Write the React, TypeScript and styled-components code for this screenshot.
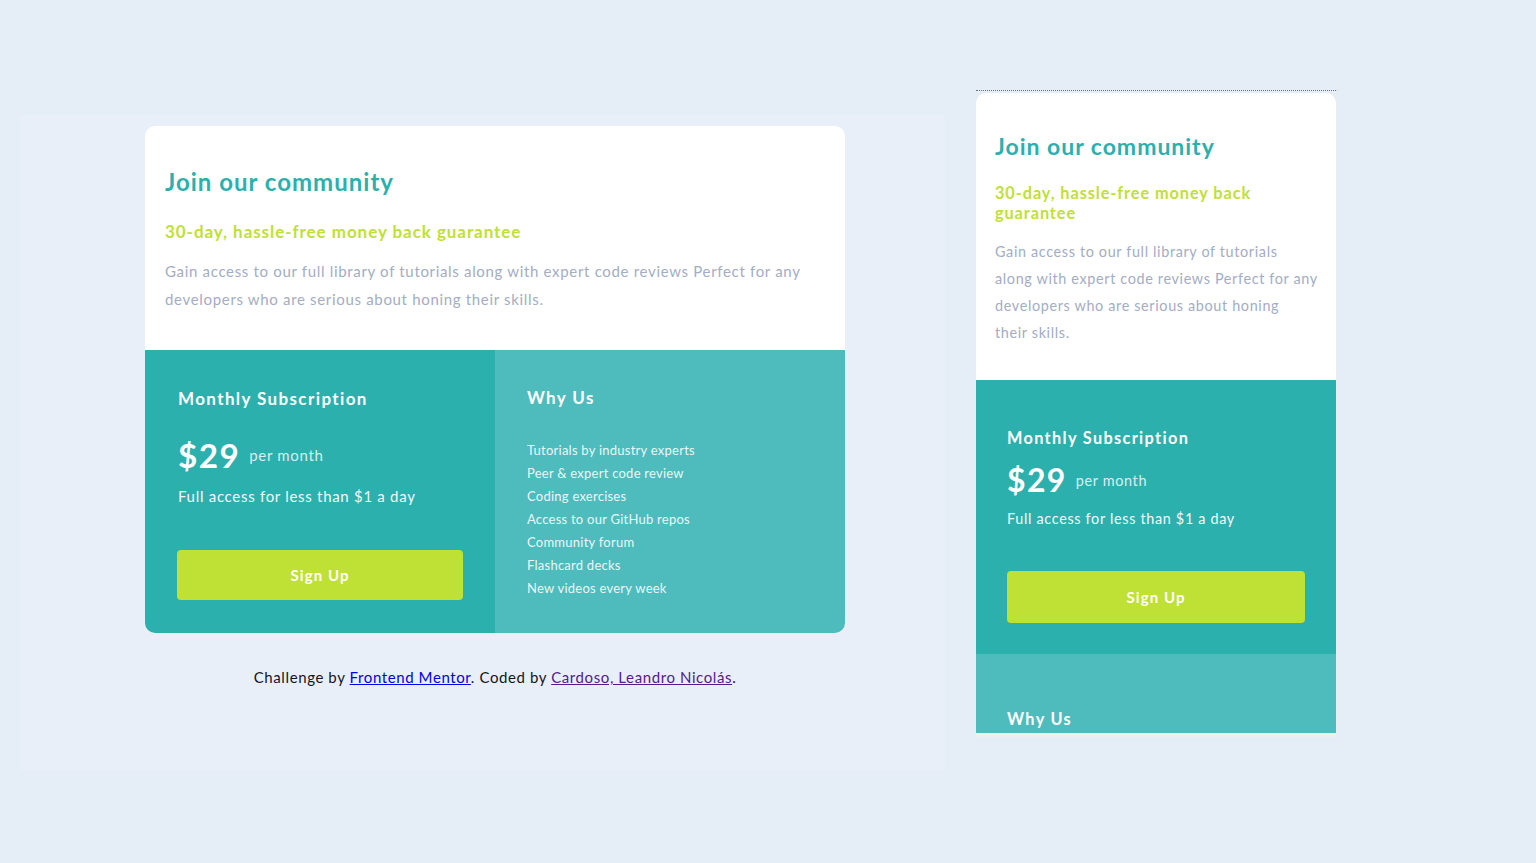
import React from "react";
import styled, { createGlobalStyle } from "styled-components";

const GlobalStyle = createGlobalStyle`
  body {
    margin: 0;
    background-color: #e5edf7;
    font-family: "Lato", "Open Sans", sans-serif;
  }
`;

const Page = styled.main`
  display: flex;
  align-items: flex-start;
  gap: 31px;
  padding: 90px 0 0 20px;
  min-height: 773px;
`;

const DesktopStage = styled.section`
  margin-top: 25px;
  width: 925px;
  height: 655px;
  background-color: #e8eff9;
  padding: 11px 100px 0 125px;
  box-sizing: border-box;
`;

const MobileFrame = styled.section`
  width: 362px;
  height: 647px;
  box-sizing: border-box;
  border-top: 1px dotted #6d6d6d;
  border-right: 2px solid #e9edf1;
  border-bottom: 4px solid #eeeeee;
  overflow: hidden;
  padding-top: 2px;
  background-color: #e5edf7;
`;

/* text sizes are in em so the mobile copy can shrink a touch */
const Card = styled.article<{ $mobile?: boolean }>`
  width: ${(p) => (p.$mobile ? "360px" : "700px")};
  font-size: ${(p) => (p.$mobile ? "14.4px" : "15px")};
  background: #fff;
  border-radius: ${(p) => (p.$mobile ? "10px 10px 0 0" : "10px")};
  overflow: hidden;
`;

const Intro = styled.div<{ $mobile?: boolean }>`
  padding: ${(p) => (p.$mobile ? "39px 20px 34px 19px" : "41px 20px 37px 20px")};
`;

const Title = styled.h1`
  margin: 0;
  font-size: 1.6em;
  line-height: 29px;
  font-weight: 700;
  color: #2bb0ae;
  letter-spacing: 0.042em;
`;

const Guarantee = styled.h2<{ $mobile?: boolean }>`
  margin: ${(p) => (p.$mobile ? "22px 0 15px" : "26px 0 15px")};
  font-size: 1.1333em;
  line-height: 20px;
  font-weight: 700;
  color: #bfe034;
  letter-spacing: 0.056em;
`;

const Lead = styled.p<{ $mobile?: boolean }>`
  margin: 0;
  font-size: 1em;
  line-height: ${(p) => (p.$mobile ? "27px" : "28px")};
  color: #a3adc4;
  letter-spacing: 0.045em;
  white-space: ${(p) => (p.$mobile ? "nowrap" : "normal")};
`;

const Bottom = styled.div<{ $mobile?: boolean }>`
  display: grid;
  grid-template-columns: ${(p) => (p.$mobile ? "360px" : "350px 350px")};
`;

const Subscription = styled.div<{ $mobile?: boolean }>`
  background-color: #2bb0ae;
  padding: ${(p) => (p.$mobile ? "47px 31px 31px" : "38px 31px 33px 33px")};
  color: #fff;
`;

const WhyUs = styled.div<{ $mobile?: boolean }>`
  background-color: #4ebbbd;
  padding: ${(p) => (p.$mobile ? "54px 31px 40px" : "37px 32px 33px 32px")};
  color: #fff;
`;

const BlockTitle = styled.h3`
  margin: 0;
  font-size: 1.1333em;
  line-height: 22px;
  font-weight: 700;
  letter-spacing: 0.082em;
`;

const PriceRow = styled.div<{ $mobile?: boolean }>`
  display: flex;
  align-items: center;
  gap: 9px;
  margin-top: ${(p) => (p.$mobile ? "16px" : "30px")};
`;

const Price = styled.span`
  font-size: 2.22em;
  line-height: 30px;
  font-weight: 700;
  letter-spacing: 0.042em;
`;

const PerMonth = styled.span`
  font-size: 1em;
  color: #d7efee;
  letter-spacing: 0.047em;
`;

const Access = styled.p<{ $mobile?: boolean }>`
  margin: ${(p) => (p.$mobile ? "14px 0 0" : "16px 0 0")};
  font-size: 1em;
  line-height: 20px;
  color: #f1fafa;
  letter-spacing: 0.047em;
`;

const SignUp = styled.button<{ $mobile?: boolean }>`
  display: block;
  width: ${(p) => (p.$mobile ? "298px" : "286px")};
  height: ${(p) => (p.$mobile ? "52px" : "50px")};
  margin-top: ${(p) => (p.$mobile ? "42px" : "44px")};
  margin-left: ${(p) => (p.$mobile ? "0" : "-1px")};
  border: none;
  border-radius: 4px;
  background-color: #bfe034;
  color: #fff;
  font-family: inherit;
  font-size: 15px;
  font-weight: 700;
  letter-spacing: 1.1px;
  cursor: pointer;
`;

const Features = styled.ul`
  list-style: none;
  margin: 30px 0 0;
  padding: 0;
`;

const Feature = styled.li`
  font-size: 0.8667em;
  line-height: 23px;
  color: #eaf7f7;
  letter-spacing: 0.019em;
`;

const Attribution = styled.p`
  margin: 35px 0 0;
  width: 700px;
  text-align: center;
  font-size: 15px;
  color: #14141e;
  letter-spacing: 0.6px;

  a {
    color: #0000ee;
  }

  a.visited {
    color: #551a8b;
  }
`;

const features = [
  "Tutorials by industry experts",
  "Peer & expert code review",
  "Coding exercises",
  "Access to our GitHub repos",
  "Community forum",
  "Flashcard decks",
  "New videos every week",
];

const leadText =
  "Gain access to our full library of tutorials along with expert code reviews Perfect for any developers who are serious about honing their skills.";

// narrow layout breaks the copy where the original narrow view does
const leadLines = [
  "Gain access to our full library of tutorials",
  "along with expert code reviews Perfect for any",
  "developers who are serious about honing",
  "their skills.",
];

const PricingCard: React.FC<{ mobile?: boolean }> = ({ mobile }) => (
  <Card $mobile={mobile}>
    <Intro $mobile={mobile}>
      <Title>Join our community</Title>
      <Guarantee $mobile={mobile}>30-day, hassle-free money back guarantee</Guarantee>
      <Lead $mobile={mobile}>
        {mobile
          ? leadLines.map((line, i) => (
              <React.Fragment key={i}>
                {line}
                {i < leadLines.length - 1 && <br />}
              </React.Fragment>
            ))
          : leadText}
      </Lead>
    </Intro>
    <Bottom $mobile={mobile}>
      <Subscription $mobile={mobile}>
        <BlockTitle>Monthly Subscription</BlockTitle>
        <PriceRow $mobile={mobile}>
          <Price>$29</Price>
          <PerMonth>per month</PerMonth>
        </PriceRow>
        <Access $mobile={mobile}>Full access for less than $1 a day</Access>
        <SignUp $mobile={mobile}>Sign Up</SignUp>
      </Subscription>
      <WhyUs $mobile={mobile}>
        <BlockTitle>Why Us</BlockTitle>
        <Features>
          {features.map((f) => (
            <Feature key={f}>{f}</Feature>
          ))}
        </Features>
      </WhyUs>
    </Bottom>
  </Card>
);

const App: React.FC = () => (
  <>
    <GlobalStyle />
    <Page>
      <DesktopStage>
        <PricingCard />
        <Attribution>
          Challenge by <a href="#">Frontend Mentor</a>. Coded by{" "}
          <a className="visited" href="#">
            Cardoso, Leandro Nicolás
          </a>
          .
        </Attribution>
      </DesktopStage>
      <MobileFrame>
        <PricingCard mobile />
      </MobileFrame>
    </Page>
  </>
);

export default App;
